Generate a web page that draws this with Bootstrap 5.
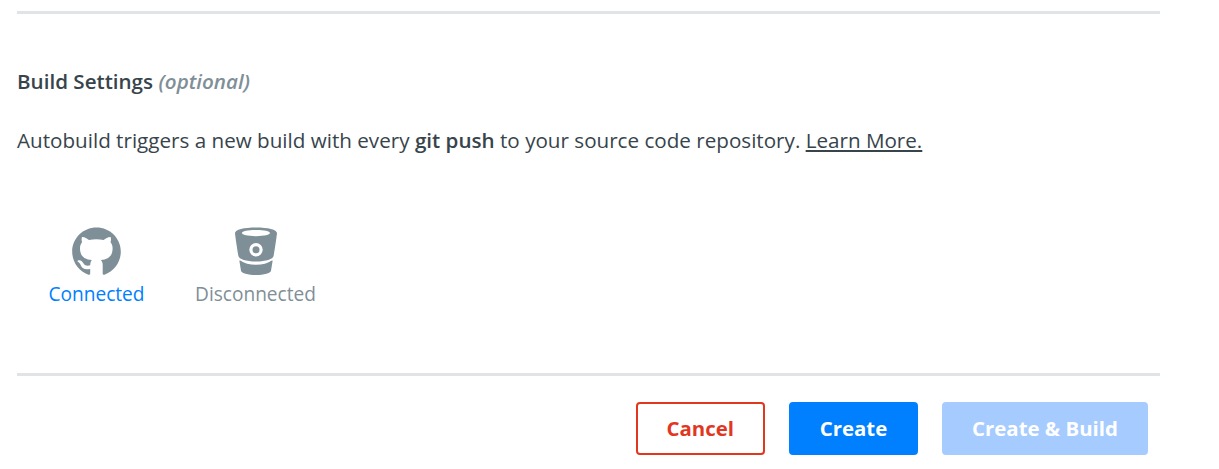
<!DOCTYPE html>
<html lang="en">
<head>
<meta charset="utf-8">
<meta name="viewport" content="width=device-width, initial-scale=1">
<title>Build Settings</title>
<link href="https://cdn.jsdelivr.net/npm/bootstrap@5.3.0/dist/css/bootstrap.min.css" rel="stylesheet">
<style>
body{font-family:"Open Sans",sans-serif;font-size:20.64px;line-height:30px;color:#37444c;background:#fff;overflow:hidden}
.build-form{width:1143px;margin-left:17px;padding-top:11px}
.rule{height:3px;background:#e0e4e7}
.heading{font-size:20.6px;line-height:30px;font-weight:600;margin:52px 0 29px}
.optional{color:#7f8f98;font-style:italic;font-weight:600}
.intro{white-space:nowrap}
.learn{color:inherit;text-decoration-thickness:2px;text-underline-offset:2px;text-decoration-skip-ink:none}
.providers{margin-top:72px;height:146px}
.provider{width:159px;font-size:19.1px;line-height:26px;color:#7f8f98}
.provider svg{display:block;height:50px;margin-bottom:4px}
.provider.linked{color:#0080ff}
.glyph{fill:#7f8f98}
.actions{gap:23.75px;padding:26px 12px 0 0}
.actions .btn{height:53px;width:129.5px;padding:0;border-width:2px;border-radius:4px;font-size:20.4px;font-weight:700}
.btn-cancel{color:#e2371f;border-color:#e2371f;background:#fff}
.btn-create{color:#fff;background:#0080ff;border-color:#0080ff}
.actions .btn-both{width:206px}
.actions .btn-both:disabled{color:#fff;background:#a6cbff;border-color:#a6cbff;opacity:1}
</style>
</head>
<body>
<main class="build-form">
  <div class="rule"></div>
  <h2 class="heading">Build Settings <span class="optional">(optional)</span></h2>
  <p class="intro mb-0">Autobuild triggers a new build with every <strong class="fw-semibold">git push</strong> to your source code repository. <a class="learn" href="#">Learn More.</a></p>
  <div class="providers d-flex">
    <div class="provider linked d-flex flex-column align-items-center">
      <svg class="glyph" width="49" height="50" viewBox="0 0 49 50" aria-hidden="true"><path d="M24.500.500C11 .500.200 11.300.200 24.700c0 10.600 6.700 19.600 16.300 23 1.200.2 1.700-.5 1.700-1.200V42c-5.700 1.100-7.900-.6-9.200-3.200-.5-1.300-1.300-2.700-2.800-3.700-1.300-1-.3-1.900 1-1.800 2.200.2 3.300 1.600 4.200 3 1.700 2.700 4.500 2.900 6.800 2 .2-2.400.7-4.200 1.600-5.200C11.500 32.300 8 28.500 8 21.300c0-2.400.7-4.400 2.100-6-.6-1.700-.7-3.500-.1-5.300 2.700-.1 5 1.400 7 3 4.600-1 10-1 14.600 0 2-1.600 4.300-3.100 7-3 .6 1.800.5 3.600-.1 5.300 1.400 1.600 2.100 3.600 2.100 6 0 7.200-3.500 11-11.800 11.800 1.300 1.200 1.900 3 1.900 5.100v8.300c0 .7.500 1.400 1.700 1.200 9.600-3.400 16.400-12.400 16.400-23C48.800 11.300 38 .500 24.500.500z"/></svg>
      <span>Connected</span>
    </div>
    <div class="provider d-flex flex-column align-items-center">
      <svg class="glyph" width="42" height="50" viewBox="0 0 42 50" aria-hidden="true"><path fill-rule="evenodd" d="M21 .5C9 .5 0 2.600 0 6.300c0 1 2 14.600 3.400 22.700.5 3 7.600 5.500 17.600 5.500s17.100-2.500 17.600-5.500C40 20.900 42 7.300 42 6.300 42 2.600 33 .5 21 .5zm0 2.600c8.500 0 14 1.300 14 3S29.500 9.200 21 9.200 7 7.900 7 6.100s5.500-3 14-3zm0 13a6.700 6.700 0 1 1 0 13.400 6.700 6.700 0 0 1 0-13.400z"/><circle cx="21" cy="22.800" r="3.500"/><path d="M5.200 33.500C9 36.300 14.500 37.700 21 37.700s12-1.400 15.800-4.200c.5-.3.900 0 .8.600l-1.600 9.600C35.400 46.200 29 48 21 48S6.600 46.200 6 43.700L4.400 34.100c-.1-.6.300-.9.800-.6z"/></svg>
      <span>Disconnected</span>
    </div>
  </div>
  <div class="rule"></div>
  <div class="actions d-flex justify-content-end">
    <button type="button" class="btn btn-cancel">Cancel</button>
    <button type="button" class="btn btn-create">Create</button>
    <button type="button" class="btn btn-both" disabled>Create &amp; Build</button>
  </div>
</main>
<script src="https://cdn.jsdelivr.net/npm/bootstrap@5.3.0/dist/js/bootstrap.bundle.min.js"></script>
</body>
</html>
